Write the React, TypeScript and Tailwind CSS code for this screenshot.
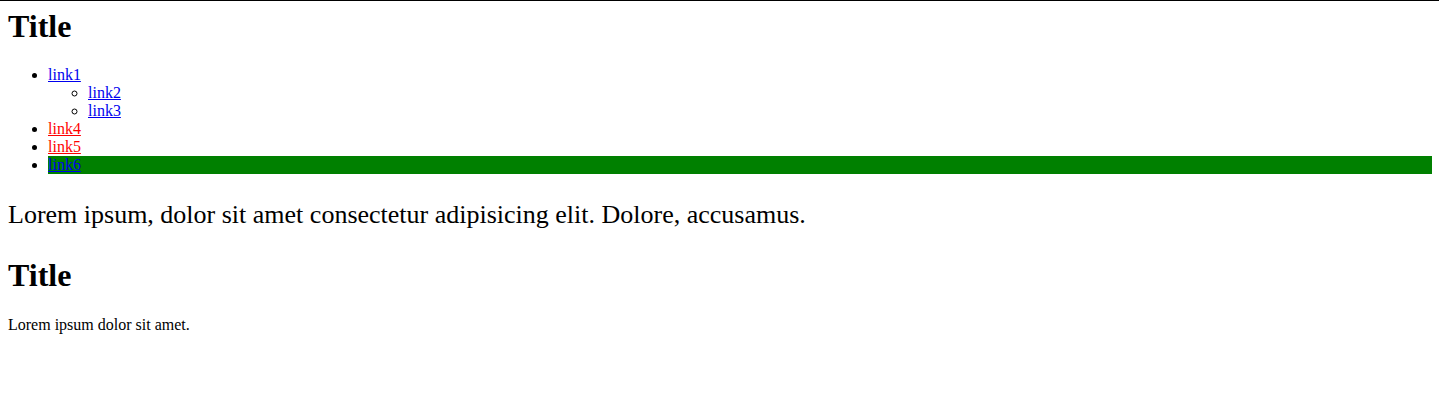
export default function App() {
	return (
		<div className="min-h-[416px] border-t border-black bg-white px-2 text-black [font-family:'Liberation_Serif','Times_New_Roman',serif]">
			<h1 className="mt-[7px] mb-[21px] text-[32px] font-bold leading-[37px]">Title</h1>
			<ul className="list-disc pl-10 text-base leading-[18px]">
				<li>
					<a href="#" className="text-[#0000ee] underline">
						link1
					</a>
					<ul className="list-[circle] pl-10">
						<li>
							<a href="#" className="text-[#0000ee] underline">
								link2
							</a>
						</li>
						<li>
							<a href="#" className="text-[#0000ee] underline">
								link3
							</a>
						</li>
					</ul>
				</li>
				<li>
					<a href="#" className="text-[#ff0000] underline">
						link4
					</a>
				</li>
				<li>
					<a href="#" className="text-[#ff0000] underline">
						link5
					</a>
				</li>
				<li className="mr-[-1px] bg-[#008000]">
					<a href="#" className="text-[#0000ee] underline">
						link6
					</a>
				</li>
			</ul>
			<p className="mt-[26px] text-[26px] leading-[30px]">
				Lorem ipsum, dolor sit amet consectetur adipisicing elit. Dolore, accusamus.
			</p>
			<h2 className="mt-[27px] mb-[22px] text-[32px] font-bold leading-[37px]">Title</h2>
			<p className="text-base leading-[18px]">Lorem ipsum dolor sit amet.</p>
		</div>
	);
}
